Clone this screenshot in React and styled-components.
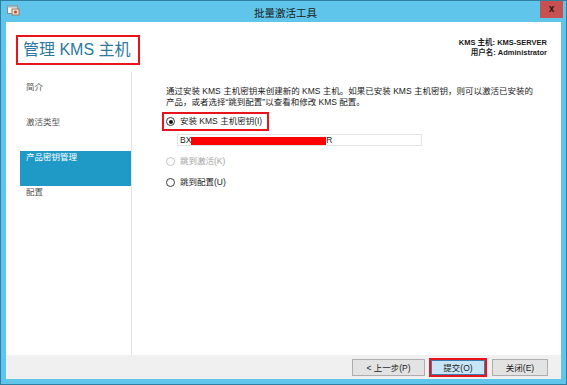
import styled, { createGlobalStyle } from "styled-components";

const Global = createGlobalStyle`
  html, body { margin: 0; padding: 0; background: #fff; }
  body { font-family: "Liberation Sans", "Noto Sans CJK SC", sans-serif; }
`;

const FONT = `"Liberation Sans", "Noto Sans CJK SC", sans-serif`;

export default function App() {
  return (
    <>
      <Global />
      <Window>
        <TitleBar>
          <AppIcon />
          <Title>批量激活工具</Title>
          <CloseButton>x</CloseButton>
        </TitleBar>
        <Body>
          <Header>
            <Heading>管理 KMS 主机</Heading>
            <Info>
              <div>KMS 主机: KMS-SERVER</div>
              <div>用户名: Administrator</div>
            </Info>
          </Header>
          <Main>
            <Nav>
              <NavItem>简介</NavItem>
              <NavItem>激活类型</NavItem>
              <NavItem $active>产品密钥管理</NavItem>
              <NavItem>配置</NavItem>
            </Nav>
            <Content>
              <Paragraph>
                通过安装 KMS 主机密钥来创建新的 KMS 主机。如果已安装 KMS 主机密钥，则可以激活已安装的
                <br />
                产品，或者选择“跳到配置”以查看和修改 KMS 配置。
              </Paragraph>
              <Highlight>
                <Radio $checked />
                <RadioLabel>安装 KMS 主机密钥(I)</RadioLabel>
              </Highlight>
              <KeyInput>
                BX<Redacted />R
              </KeyInput>
              <RadioRow $gap={10}>
                <Radio $disabled />
                <RadioLabel $disabled>跳到激活(K)</RadioLabel>
              </RadioRow>
              <RadioRow $gap={10}>
                <Radio />
                <RadioLabel>跳到配置(U)</RadioLabel>
              </RadioRow>
            </Content>
          </Main>
          <Footer>
            <Button $width={73}>&lt; 上一步(P)</Button>
            <Marked>
              <Button $width={54} $primary>提交(O)</Button>
            </Marked>
            <Button $width={56}>关闭(E)</Button>
          </Footer>
        </Body>
      </Window>
    </>
  );
}

function AppIcon() {
  return (
    <IconSvg width="13" height="12" viewBox="0 0 13 12">
      <rect x="0.5" y="1.5" width="10" height="8" fill="#f4f4f4" stroke="#8a8a8a" />
      <rect x="0.5" y="1.5" width="10" height="2" fill="#9fb8c8" />
      <rect x="5" y="5" width="7" height="6" fill="#e8e0d0" stroke="#9a7a60" />
      <circle cx="8.5" cy="8" r="1.6" fill="#c84a3a" />
    </IconSvg>
  );
}

const Window = styled.div`
  width: 567px;
  height: 385px;
  box-sizing: border-box;
  background: #60c5ea;
  border: 1px solid #2e7fa2;
  display: flex;
  flex-direction: column;
  font-family: ${FONT};
`;

const TitleBar = styled.div`
  height: 21px;
  display: flex;
  align-items: flex-start;
  position: relative;
`;

const IconSvg = styled.svg`
  margin: 3px 0 0 6px;
`;

const Title = styled.div`
  position: absolute;
  left: 0;
  right: 0;
  top: 4px;
  text-align: center;
  font-size: 10.5px;
  color: #1b1b1b;
  padding-left: 4px;
`;

const CloseButton = styled.div`
  margin-left: auto;
  margin-right: 3px;
  width: 23px;
  height: 17px;
  background: #c75050;
  color: #2a1414;
  font-weight: bold;
  font-size: 10px;
  line-height: 15px;
  text-align: center;
  position: relative;
  z-index: 1;
`;

const Body = styled.div`
  flex: 1;
  margin: 0 5px 5px 5px;
  background: #fff;
  display: flex;
  flex-direction: column;
`;

const Header = styled.div`
  height: 50px;
  display: flex;
  justify-content: space-between;
  align-items: flex-start;
  box-sizing: border-box;
  padding: 13px 14px 0 10px;
`;

const Heading = styled.div`
  border: 2px solid #e8141b;
  height: 30px;
  box-sizing: border-box;
  padding: 0 7px 0 5px;
  font-size: 16px;
  line-height: 26px;
  color: #2c78a0;
`;

const Info = styled.div`
  margin-top: 3px;
  text-align: right;
  font-size: 7.5px;
  line-height: 10px;
  font-weight: bold;
  color: #1a1a1a;
`;

const Main = styled.div`
  flex: 1;
  display: flex;
`;

const Nav = styled.div`
  width: 125px;
  border-right: 1px solid #e4e4e4;
  padding-top: 9px;
  box-sizing: content-box;
`;

const NavItem = styled.div`
  height: 35px;
  margin-left: 14px;
  padding-left: 6px;
  font-size: 8.5px;
  line-height: 12px;
  color: ${(p) => (p.$active ? "#fff" : "#555")};
  background: ${(p) => (p.$active ? "#1f9ac7" : "transparent")};
`;

const Content = styled.div`
  flex: 1;
  padding: 14px 0 0 34px;
  font-size: 8.5px;
  color: #1a1a1a;
`;

const Paragraph = styled.div`
  line-height: 11px;
  white-space: nowrap;
`;

const RadioRow = styled.div`
  display: flex;
  align-items: center;
  height: 11px;
  margin-top: ${(p) => p.$gap}px;
`;

const Highlight = styled.div`
  display: flex;
  align-items: center;
  width: 107px;
  height: 19px;
  box-sizing: border-box;
  border: 2px solid #e8141b;
  margin: 4px 0 0 -4px;
  padding-left: 2px;
`;

const Radio = styled.span`
  width: 9px;
  height: 9px;
  box-sizing: border-box;
  border-radius: 50%;
  border: 1px solid ${(p) => (p.$disabled ? "#c4c4c4" : "#3a3a3a")};
  background: #fff;
  display: inline-flex;
  align-items: center;
  justify-content: center;
  &::after {
    content: "";
    width: 4px;
    height: 4px;
    border-radius: 50%;
    background: ${(p) => (p.$checked ? "#111" : "transparent")};
  }
`;

const RadioLabel = styled.span`
  margin-left: 5px;
  line-height: 11px;
  color: ${(p) => (p.$disabled ? "#a3a3a3" : "#1a1a1a")};
`;

const KeyInput = styled.div`
  margin: 3px 0 0 11px;
  width: 245px;
  height: 12px;
  box-sizing: border-box;
  border: 1px solid #e2e2e2;
  display: flex;
  align-items: center;
  padding-left: 2px;
  line-height: 10px;
  color: #222;
`;

const Redacted = styled.span`
  width: 135px;
  height: 8px;
  margin-top: 1px;
  background: #ff0000;
`;

const Footer = styled.div`
  height: 24px;
  background: #f0f0f0;
  display: flex;
  align-items: center;
  justify-content: flex-end;
  gap: 4px;
  padding-right: 13px;
`;

const Marked = styled.div`
  border: 2px solid #e8141b;
  display: flex;
  margin-right: 1px;
`;

const Button = styled.div`
  width: ${(p) => p.$width}px;
  height: ${(p) => (p.$primary ? 15 : 17)}px;
  box-sizing: border-box;
  border: 1px solid ${(p) => (p.$primary ? "#3c7fb1" : "#adadad")};
  background: ${(p) => (p.$primary ? "#c9e6f8" : "#e3e3e3")};
  font-size: 8.5px;
  color: #1a1a1a;
  display: flex;
  align-items: center;
  justify-content: center;
`;
